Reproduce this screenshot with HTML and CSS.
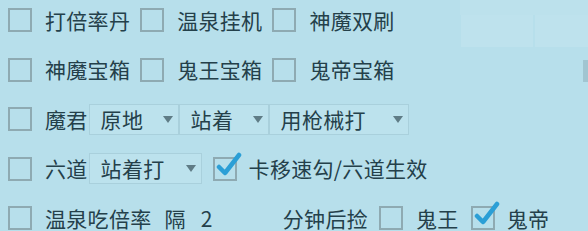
FILE: index.html
```html
<!DOCTYPE html>
<html lang="zh">
<head>
<meta charset="UTF-8">
<meta name="viewport" content="width=device-width, initial-scale=1.0">
<title>设置</title>
<link rel="stylesheet" href="styles.css">
</head>
<body>

<!-- 背景里透出来的浅色块 -->
<div class="ghost ghost-top"></div>
<div class="ghost ghost-a"></div>
<div class="ghost ghost-b"></div>
<div class="ghost-bar"></div>

<div class="panel">
    <div class="row">
        <label class="item"><span class="box"></span><span class="txt">打倍率丹</span></label>
        <label class="item"><span class="box"></span><span class="txt">温泉挂机</span></label>
        <label class="item"><span class="box"></span><span class="txt">神魔双刷</span></label>
    </div>

    <div class="row">
        <label class="item"><span class="box"></span><span class="txt">神魔宝箱</span></label>
        <label class="item"><span class="box"></span><span class="txt">鬼王宝箱</span></label>
        <label class="item"><span class="box"></span><span class="txt">鬼帝宝箱</span></label>
    </div>

    <div class="row">
        <label class="item tight"><span class="box"></span><span class="txt">魔君</span></label>
        <div class="select w1"><span>原地</span><i class="arrow"></i></div>
        <div class="select w1"><span>站着</span><i class="arrow"></i></div>
        <div class="select w3"><span>用枪械打</span><i class="arrow"></i></div>
    </div>

    <div class="row">
        <label class="item tight"><span class="box"></span><span class="txt">六道</span></label>
        <div class="select w2"><span>站着打</span><i class="arrow"></i></div>
        <label class="item after-select">
            <span class="box checked">
                <svg viewBox="0 0 30 28" width="30" height="28"><path d="M5 15 L11 21 L25 3" fill="none" stroke="#2b9fd6" stroke-width="4.5" stroke-linecap="round" stroke-linejoin="round"/></svg>
            </span>
            <span class="txt">卡移速勾/六道生效</span>
        </label>
    </div>

    <div class="row">
        <label class="item"><span class="box"></span><span class="txt">温泉吃倍率</span></label>
        <span class="txt gap-l">隔</span>
        <span class="field">2</span>
        <span class="txt">分钟后捡</span>
        <label class="item small-gap"><span class="box"></span><span class="txt">鬼王</span></label>
        <label class="item">
            <span class="box checked">
                <svg viewBox="0 0 30 28" width="30" height="28"><path d="M5 15 L11 21 L25 3" fill="none" stroke="#2b9fd6" stroke-width="4.5" stroke-linecap="round" stroke-linejoin="round"/></svg>
            </span>
            <span class="txt">鬼帝</span>
        </label>
    </div>
</div>

</body>
</html>
```

FILE: styles.css
```css
body {
    margin: 0;
    background-color: #b7dfeb;
    color: #24404a;
    font-family: "Noto Sans CJK SC", "Noto Sans", sans-serif;
    font-size: 21px;
    line-height: 1;
    position: relative;
    height: 231px;
    overflow: hidden;
}
.panel {
    display: flex;
    flex-direction: column;
    gap: 9.5px;
    padding-left: 8px;
    position: relative;
}
.row {
    display: flex;
    align-items: center;
    height: 40px;
}
.item {
    display: flex;
    align-items: center;
    margin-right: 10px;
}
.item.tight {
    margin-right: 1px;
}
.item.after-select {
    margin-left: 11px;
}
.item.small-gap {
    margin-left: 11px;
    margin-right: 12px;
}
.box {
    width: 20px;
    height: 20px;
    border: 2px solid #8eaab2;
    margin-right: 13px;
    position: relative;
    flex-shrink: 0;
}
.box.checked {
    margin-right: 12px;
}
.box svg {
    position: absolute;
    left: -1px;
    top: -7px;
}
.txt {
    white-space: nowrap;
    letter-spacing: 0.3px;
}
.gap-l {
    margin-left: 3px;
}
.field {
    width: 82px;
    margin-left: 15px;
    letter-spacing: 0;
}
.select {
    display: flex;
    align-items: center;
    height: 31px;
    box-sizing: border-box;
    border: 1px solid #a9d0dc;
    background-color: #bce2ed;
    padding-left: 11px;
    padding-right: 5px;
    justify-content: space-between;
}
.select span {
    letter-spacing: 0.3px;
}
.w1 { width: 90px; }
.w2 { width: 113px; }
.w3 { width: 140px; }
.arrow {
    width: 0;
    height: 0;
    border-left: 5px solid transparent;
    border-right: 5px solid transparent;
    border-top: 7px solid #5f7c86;
}
.ghost {
    position: absolute;
    background-color: rgba(255, 255, 255, 0.07);
}
.ghost-top {
    left: 460px;
    top: 0;
    width: 128px;
    height: 15px;
}
.ghost-a {
    left: 461px;
    top: 15px;
    width: 72px;
    height: 32px;
    background-color: rgba(255, 255, 255, 0.1);
}
.ghost-b {
    left: 535px;
    top: 15px;
    width: 53px;
    height: 32px;
    background-color: rgba(255, 255, 255, 0.1);
}
.ghost-bar {
    position: absolute;
    left: 583px;
    top: 60px;
    width: 5px;
    height: 22px;
    background-color: rgba(120, 150, 160, 0.35);
}
```
